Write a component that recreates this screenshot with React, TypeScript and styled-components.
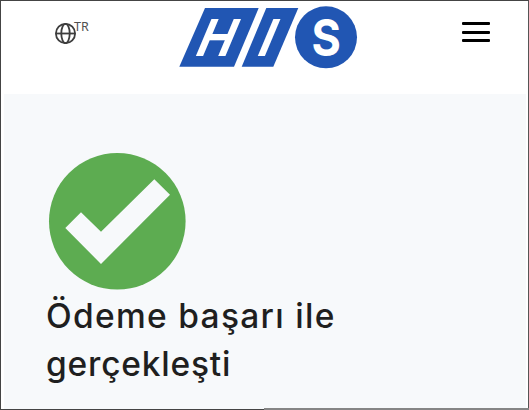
import React from "react";
import styled, { createGlobalStyle } from "styled-components";

const GlobalStyle = createGlobalStyle`
  * {
    box-sizing: border-box;
  }

  body {
    margin: 0;
    background: #ffffff;
    overflow: hidden;
  }
`;

const Page = styled.div`
  position: relative;
  display: flex;
  flex-direction: column;
  width: 529px;
  height: 410px;
  border: 1px solid #444444;
  border-right-color: #555555;
  background: #ffffff;
`;

const Header = styled.header`
  display: flex;
  justify-content: space-between;
  align-items: flex-start;
  height: 93px;
  padding: 5px 38px 0 53px;
`;

const Language = styled.div`
  display: flex;
  align-items: flex-start;
  width: 60px;
  padding-top: 16px;
`;

const LanguageCode = styled.span`
  margin: -5px 0 0 -3px;
  font-family: "Noto Sans", sans-serif;
  font-size: 12.5px;
  line-height: 19px;
  color: #505050;
`;

const Logo = styled.svg`
  display: block;
  margin-left: 4px;
  font-family: Inter, sans-serif;
  font-weight: 700;
`;

const MenuButton = styled.button`
  display: flex;
  flex-direction: column;
  gap: 5.5px;
  width: 28px;
  margin: 16px 0 0 44px;
  padding: 0;
  border: 0;
  background: none;
`;

const MenuLine = styled.span`
  width: 28px;
  height: 3px;
  border-radius: 1px;
  background: #000000;
`;

const Content = styled.main`
  flex: 1;
  margin: 0 2px 0 3px;
  padding: 58px 0 0 42px;
  background: #f7f9fb;
`;

const SuccessIcon = styled.svg`
  display: block;
  margin-left: 2px;
`;

const Title = styled.h1`
  margin: 2px 0 0;
  font-family: Inter, sans-serif;
  font-size: 33.5px;
  font-weight: 500;
  line-height: 48px;
  color: #1f1f1f;
`;

const TitleLine = styled.span<{ $spacing: number }>`
  display: block;
  white-space: nowrap;
  letter-spacing: ${({ $spacing }) => $spacing}px;
`;

const BottomEdge = styled.div`
  position: absolute;
  right: -1px;
  bottom: -1px;
  width: 265px;
  height: 2px;
  background: #858585;
`;

const App = () => {
  return (
    <>
      <GlobalStyle />
      <Page>
        <Header>
          <Language>
            <svg
              width="23"
              height="23"
              viewBox="0 0 23 23"
              fill="none"
              stroke="#3d3d3d"
              strokeWidth="1.8"
            >
              <circle cx="11.5" cy="11.5" r="9.6" />
              <ellipse cx="11.5" cy="11.5" rx="4.2" ry="9.6" />
              <path d="M1.9 11.5h19.2" />
            </svg>
            <LanguageCode>TR</LanguageCode>
          </Language>
          <Logo width="180" height="64" viewBox="178 6 180 64">
            <path d="M205 8H258.7L234 66.7H179.3Z" fill="#2156b3" />
            <path d="M266.3 8H298.3L273.3 66.7H241.7Z" fill="#2156b3" />
            <circle cx="326" cy="37.3" r="31" fill="#2156b3" />
            <g fill="#ffffff" fontSize="51">
              <text transform="matrix(0.94 0 -0.42 1 192.8 56)">H</text>
              <text transform="matrix(0.92 0 -0.42 1 254.8 56)">I</text>
              <text textAnchor="middle" transform="matrix(0.88 0 0 1 326.3 56)">
                S
              </text>
            </g>
          </Logo>
          <MenuButton aria-label="Menu">
            <MenuLine />
            <MenuLine />
            <MenuLine />
          </MenuButton>
        </Header>
        <Content>
          <SuccessIcon width="139" height="138" viewBox="48 152 139 138">
            <circle cx="117.3" cy="221.3" r="68.3" fill="#5dac51" />
            <path
              d="M65.3 228 81 212.3 101 231.7 154.3 179.3 170 194.7 101 264Z"
              fill="#f7f9fb"
            />
          </SuccessIcon>
          <Title>
            <TitleLine $spacing={1.3}>Ödeme başarı ile</TitleLine>
            <TitleLine $spacing={0.8}>gerçekleşti</TitleLine>
          </Title>
        </Content>
        <BottomEdge />
      </Page>
    </>
  );
};

export default App;
